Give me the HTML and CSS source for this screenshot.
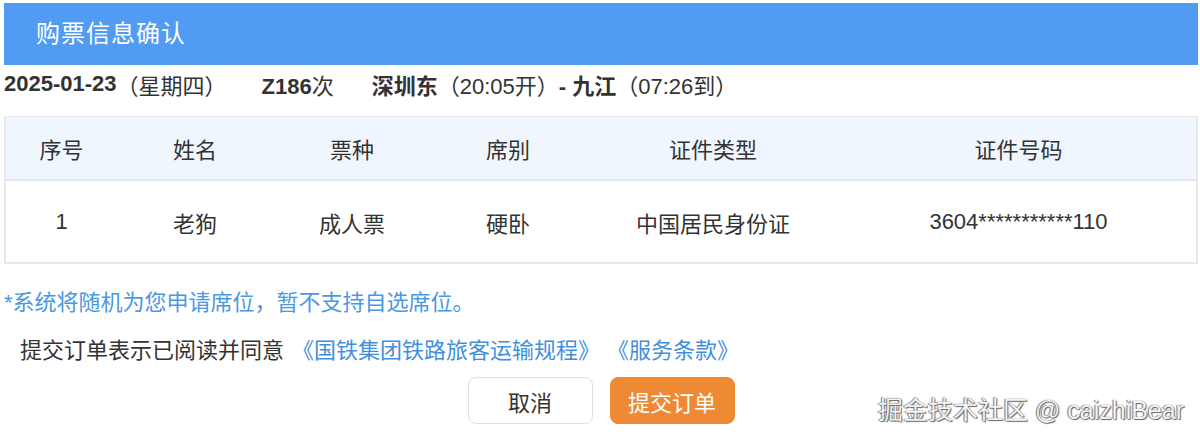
FILE: index.html
```html
<!DOCTYPE html>
<html lang="zh-CN">
<head>
<meta charset="utf-8">
<title>购票信息确认</title>
<link rel="stylesheet" href="styles.css">
</head>
<body>
<div class="page">
  <div class="header">购票信息确认</div>
  <div class="trip">
    <span class="b">2025-01-23</span><span>（星期四）</span>
    <span class="train"><span class="b">Z186</span>次</span>
    <span class="route"><span class="b">深圳东</span>（20:05开）<span class="b">- 九江</span>（07:26到）</span>
  </div>
  <div class="table">
    <div class="row head">
      <div>序号</div><div>姓名</div><div>票种</div><div>席别</div><div>证件类型</div><div>证件号码</div>
    </div>
    <div class="row body">
      <div>1</div><div>老狗</div><div>成人票</div><div>硬卧</div><div>中国居民身份证</div><div>3604***********110</div>
    </div>
  </div>
  <div class="note">*系统将随机为您申请席位，暂不支持自选席位。</div>
  <div class="agree">提交订单表示已阅读并同意<a class="link">《国铁集团铁路旅客运输规程》</a><a class="link">《服务条款》</a></div>
  <div class="actions">
    <button class="btn cancel">取消</button>
    <button class="btn submit">提交订单</button>
  </div>
  <div class="watermark">掘金技术社区 @ caizhiBear</div>
</div>
</body>
</html>
```
FILE: styles.css
```css
* { box-sizing: border-box; }
html, body { margin: 0; padding: 0; background: #fff; }
body {
  font-family: "Liberation Sans", "Noto Sans CJK SC", sans-serif;
  color: #333;
  font-size: 22px;
}
.page {
  position: relative;
  width: 1200px;
  height: 440px;
  padding: 3px 2px 0 4px;
}
.header {
  height: 62px;
  background: #519bf2;
  color: #fff;
  font-size: 24px;
  line-height: 62px;
  padding-left: 32px;
  letter-spacing: 1px;
}
.trip {
  height: 36px;
  display: flex;
  align-items: center;
  font-size: 22px;
  margin-top: 1px;
}
.b { font-weight: bold; }
.train { margin-left: 35px; }
.route { margin-left: 38px; }
.table {
  margin-top: 14px;
  border: 2px solid #e6e8ec;
  border-top-width: 1px;
}
.row {
  display: grid;
  grid-template-columns: 111px 156px 158px 154px 256px 1fr;
  align-items: center;
  text-align: center;
}
.row.head {
  height: 64px;
  background: #f0f6fd;
  border-bottom: 2px solid #e4e8ee;
}
.row.body { height: 81px; }
.note {
  margin-top: 24px;
  color: #4a98e2;
  height: 30px;
  line-height: 30px;
}
.agree {
  margin-top: 18px;
  padding-left: 16px;
  height: 30px;
  line-height: 30px;
}
.link {
  color: #3f8fdc;
  margin-left: 8px;
}
.link + .link { margin-left: 18px; }
.actions {
  margin-top: 11px;
  display: flex;
  justify-content: center;
  gap: 17px;
}
.btn {
  font-family: inherit;
  font-size: 22px;
  width: 125px;
  height: 47px;
  border-radius: 8px;
  cursor: pointer;
}
.cancel {
  background: #fff;
  border: 1px solid #dcdfe6;
  color: #333;
}
.submit {
  background: #ee8a33;
  border: 1px solid #ee8a33;
  color: #fff;
}
.watermark {
  position: absolute;
  right: 16px;
  bottom: 14px;
  font-size: 25px;
  color: #f4f4f4;
  text-shadow: 0 0 1px #555, 1px 1px 1px #666, -1px 0 1px #888;
}
```
